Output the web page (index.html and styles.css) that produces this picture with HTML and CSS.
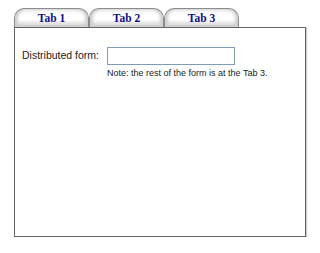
FILE: index.html
```html
<!DOCTYPE html>
<html lang="en">
<head>
    <meta charset="UTF-8">
    <title>Distributed form</title>
    <link rel="stylesheet" href="styles.css">
</head>
<body>
    <div class="tabs-wrap">
        <div class="tab-row">
            <div class="tab">Tab 1</div>
            <div class="tab">Tab 2</div>
            <div class="tab">Tab 3</div>
        </div>
        <div class="panel">
            <div class="form-row">
                <label class="field-label" for="distributed">Distributed form:</label>
                <div class="field">
                    <input type="text" id="distributed" class="text-input">
                    <p class="note">Note: the rest of the form is at the Tab 3.</p>
                </div>
            </div>
        </div>
    </div>
</body>
</html>
```

FILE: styles.css
```css
body {
    margin: 0;
    background: #fff;
    font-family: "Liberation Sans", Arial, sans-serif;
}
.tabs-wrap {
    padding: 8px 0 0 14px;
}
.tab-row {
    display: flex;
}
.tab {
    width: 75px;
    height: 19px;
    box-sizing: border-box;
    border: 1px solid #8c8c8c;
    border-bottom: none;
    border-radius: 10px 10px 0 0;
    background: linear-gradient(#f0f0f0, #ffffff 30%, #ffffff 60%, #c8c8c8);
    box-shadow: inset 3px 0 3px #d0d0d0, inset -3px 0 3px #d0d0d0;
    text-align: center;
    font-family: "Liberation Serif", "Times New Roman", serif;
    font-weight: bold;
    font-size: 11.5px;
    line-height: 19px;
    color: #10108a;
}
.panel {
    width: 292px;
    height: 210px;
    box-sizing: border-box;
    border: 1px solid #666;
    box-shadow: 1px 1px 1px #c8c8c8;
    padding: 19px 0 0 7px;
}
.form-row {
    display: flex;
    align-items: flex-start;
}
.field-label {
    width: 85px;
    font-size: 10.5px;
    line-height: 14px;
    padding-top: 1px;
    color: #222;
}
.text-input {
    display: block;
    width: 128px;
    height: 18px;
    box-sizing: border-box;
    margin: 0;
    border: 1px solid #7f9db9;
    background: #fff;
}
.note {
    margin: 2px 0 0 0;
    font-size: 9px;
    line-height: 12px;
    color: #222;
}
```
